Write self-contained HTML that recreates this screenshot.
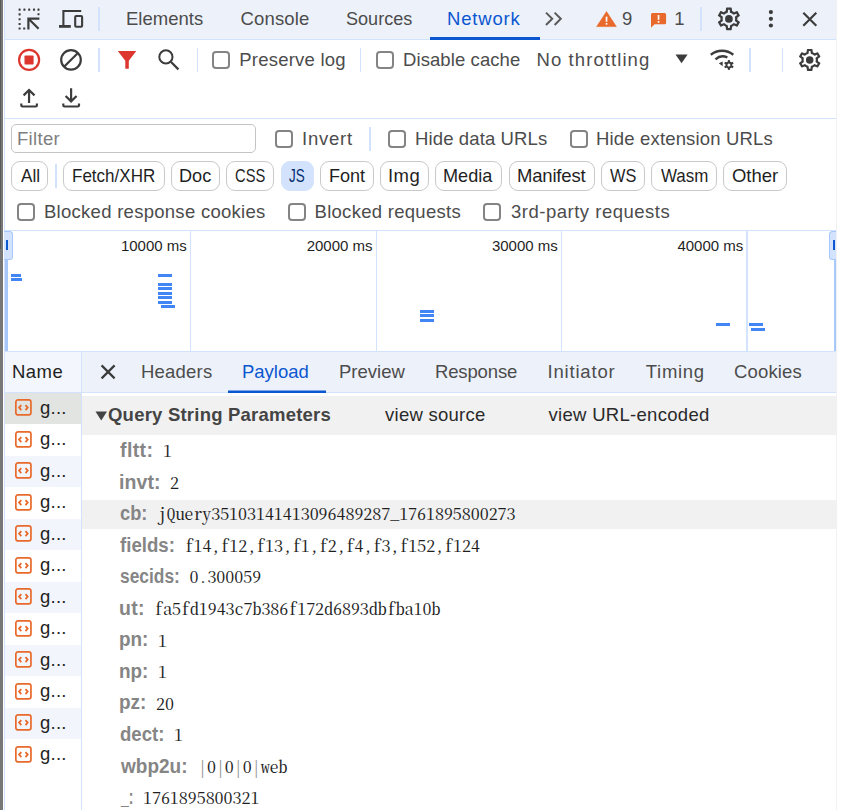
<!DOCTYPE html>
<html lang="en">
<head>
<meta charset="utf-8">
<title>DevTools - Network</title>
<style>
html,body{margin:0;padding:0;}
body{width:841px;height:810px;overflow:hidden;background:#fff;position:relative;
  font-family:"Liberation Sans",sans-serif;font-size:18.5px;color:#4c4c4c;}
.abs{position:absolute;}
.t{position:absolute;white-space:nowrap;line-height:24px;height:24px;}
.sep{position:absolute;width:1.9px;background:#d3e3fd;}
.hline{position:absolute;height:1px;background:#d3e3fd;left:5px;width:831px;}
.cb{position:absolute;box-sizing:border-box;width:18px;height:18px;border:2px solid #848484;border-radius:4px;background:#fff;}
.pill{position:absolute;top:161px;height:27.6px;border:1px solid #c9c9c9;border-radius:9px;box-sizing:content-box;
  color:#1f1f1f;text-align:center;line-height:27px;white-space:nowrap;}
.pill.sel{background:#d3e3fd;border-color:#d3e3fd;color:#062e6f;}
.tick{position:absolute;top:236px;font-size:15px;line-height:20px;color:#1f1f1f;white-space:nowrap;text-align:right;}
.grid{position:absolute;top:231px;height:120px;width:1.5px;background:#d3e3fd;}
.bar{position:absolute;height:3px;background:#4285f4;}
.row{position:absolute;left:5px;width:76px;height:31.5px;}
.row.alt{background:#f2f6fc;}
.row.sel{background:#e2e4e2;}
.row svg{position:absolute;left:9.5px;top:6.9px;}
.row span{position:absolute;left:35px;top:3px;line-height:24px;color:#1f1f1f;letter-spacing:0.25px;}
.k{position:absolute;left:120px;font-weight:bold;color:#858585;white-space:nowrap;line-height:24px;}
.v{position:absolute;white-space:nowrap;line-height:24px;color:#1f1f1f;
  font-family:"Noto Serif CJK SC","Liberation Mono",monospace;font-feature-settings:"hwid";font-size:18px;letter-spacing:-0.05px;transform:scaleY(0.9);transform-origin:0 19.8px;}
</style>
</head>
<body>
<div class="abs" style="left:0;top:0;width:3px;height:810px;background:#777"></div>
<div class="abs" style="left:0;top:0;width:1.4px;height:249px;background:#5a5a5a"></div>
<div class="abs" style="left:4px;top:0;width:1px;height:810px;background:#d3e3fd"></div>
<div class="abs" style="left:836px;top:0;width:1px;height:810px;background:#f1f1f1"></div>
<div class="abs" style="left:5px;top:0;width:831px;height:39px;background:#edf2fa"></div>
<div class="hline" style="top:39px"></div>
<div class="sep" style="left:98.3px;top:7px;height:23.5px"></div>
<div class="sep" style="left:700.3px;top:7px;height:23.5px"></div>
<div class="t" style="left:126.00px;top:6.5px;letter-spacing:0.019px;">Elements</div>
<div class="t" style="left:240.50px;top:6.5px;letter-spacing:0.152px;">Console</div>
<div class="t" style="left:345.50px;top:6.5px;transform:scaleX(0.9761);transform-origin:0 0;">Sources</div>
<div class="t" style="left:447.00px;top:6.5px;letter-spacing:0.817px;color:#0b57d0;">Network</div>
<div class="abs" style="left:430px;top:37px;width:110px;height:2.5px;background:#0b57d0"></div>
<div class="t" style="left:622.00px;top:6.5px;">9</div>
<div class="t" style="left:674.30px;top:6.5px;">1</div>
<div class="sep" style="left:98.3px;top:48px;height:24px"></div>
<div class="sep" style="left:196.5px;top:48px;height:24px"></div>
<div class="sep" style="left:359.5px;top:48px;height:24px"></div>
<div class="sep" style="left:749.2px;top:48px;height:24px"></div>
<div class="sep" style="left:781.5px;top:48px;height:24px"></div>
<div class="cb" style="left:212px;top:51px"></div>
<div class="t" style="left:239.30px;top:47.5px;letter-spacing:0.221px;">Preserve log</div>
<div class="cb" style="left:376px;top:51px"></div>
<div class="t" style="left:403.00px;top:47.5px;letter-spacing:0.090px;">Disable cache</div>
<div class="t" style="left:536.50px;top:47.5px;letter-spacing:1.087px;">No throttling</div>
<div class="hline" style="top:118px"></div>
<div class="abs" style="left:11px;top:124px;width:243px;height:26.5px;border:1px solid #c4c4c4;border-radius:5px;background:#fff"></div>
<div class="t" style="left:17.00px;top:127.3px;letter-spacing:0.310px;color:#7e7e7e;">Filter</div>
<div class="cb" style="left:275px;top:130px"></div>
<div class="t" style="left:302.00px;top:126.5px;letter-spacing:0.774px;">Invert</div>
<div class="sep" style="left:369px;top:127px;height:23.5px"></div>
<div class="cb" style="left:388px;top:130px"></div>
<div class="t" style="left:415.00px;top:126.5px;letter-spacing:0.127px;">Hide data URLs</div>
<div class="cb" style="left:570px;top:130px"></div>
<div class="t" style="left:596.00px;top:126.5px;letter-spacing:0.165px;">Hide extension URLs</div>
<div class="pill" style="left:11px;width:35px"></div>
<div class="t" style="left:21.00px;top:163.5px;transform:scaleX(0.9255);transform-origin:0 0;color:#1f1f1f;">All</div>
<div class="sep" style="left:55px;top:164px;height:24px"></div>
<div class="pill" style="left:63px;width:99.5px"></div>
<div class="t" style="left:72.00px;top:163.5px;transform:scaleX(0.9202);transform-origin:0 0;color:#1f1f1f;">Fetch/XHR</div>
<div class="pill" style="left:171px;width:46.5px"></div>
<div class="t" style="left:179.00px;top:163.5px;transform:scaleX(0.9795);transform-origin:0 0;color:#1f1f1f;">Doc</div>
<div class="pill" style="left:226px;width:45.5px"></div>
<div class="t" style="left:235.00px;top:163.5px;transform:scaleX(0.7958);transform-origin:0 0;color:#1f1f1f;">CSS</div>
<div class="pill sel" style="left:280.5px;width:31.0px"></div>
<div class="t" style="left:289.00px;top:163.5px;transform:scaleX(0.7294);transform-origin:0 0;color:#062e6f;">JS</div>
<div class="pill" style="left:320px;width:51.5px"></div>
<div class="t" style="left:328.50px;top:163.5px;transform:scaleX(0.9755);transform-origin:0 0;color:#1f1f1f;">Font</div>
<div class="pill" style="left:380px;width:46.5px"></div>
<div class="t" style="left:388.00px;top:163.5px;letter-spacing:0.475px;color:#1f1f1f;">Img</div>
<div class="pill" style="left:435px;width:65px"></div>
<div class="t" style="left:443.00px;top:163.5px;transform:scaleX(0.9781);transform-origin:0 0;color:#1f1f1f;">Media</div>
<div class="pill" style="left:508.5px;width:84.0px"></div>
<div class="t" style="left:517.00px;top:163.5px;letter-spacing:-0.182px;color:#1f1f1f;">Manifest</div>
<div class="pill" style="left:601px;width:41.5px"></div>
<div class="t" style="left:610.00px;top:163.5px;transform:scaleX(0.8825);transform-origin:0 0;color:#1f1f1f;">WS</div>
<div class="pill" style="left:651px;width:63.5px"></div>
<div class="t" style="left:661.00px;top:163.5px;transform:scaleX(0.9159);transform-origin:0 0;color:#1f1f1f;">Wasm</div>
<div class="pill" style="left:723px;width:61.5px"></div>
<div class="t" style="left:732.00px;top:163.5px;letter-spacing:-0.027px;color:#1f1f1f;">Other</div>
<div class="cb" style="left:17px;top:203px"></div>
<div class="t" style="left:44.00px;top:199.5px;letter-spacing:0.275px;">Blocked response cookies</div>
<div class="cb" style="left:288px;top:203px"></div>
<div class="t" style="left:314.50px;top:199.5px;letter-spacing:0.289px;">Blocked requests</div>
<div class="cb" style="left:483px;top:203px"></div>
<div class="t" style="left:511.00px;top:199.5px;letter-spacing:0.507px;">3rd-party requests</div>
<div class="hline" style="top:230px"></div>
<div class="grid" style="left:189.8px"></div>
<div class="grid" style="left:375.8px"></div>
<div class="grid" style="left:560.6px"></div>
<div class="grid" style="left:746.3px"></div>
<div class="tick" style="left:106.80000000000001px;width:80px">10000 ms</div>
<div class="tick" style="left:292.5px;width:80px">20000 ms</div>
<div class="tick" style="left:477.79999999999995px;width:80px">30000 ms</div>
<div class="tick" style="left:663.3px;width:80px">40000 ms</div>
<div class="abs" style="left:4.6px;top:231px;width:3.3px;height:120px;background:#a8c7fa"></div>
<div class="abs" style="left:4.4px;top:230.8px;width:8.6px;height:29px;box-sizing:border-box;background:#d3e3fd;border:1px solid #a8c7fa;border-left:0;border-radius:0 3.5px 3.5px 0"></div>
<div class="abs" style="left:5.9px;top:240px;width:2.3px;height:10px;background:#0b57d0"></div>
<div class="abs" style="left:834px;top:231px;width:2.2px;height:120px;background:#a8c7fa"></div>
<div class="abs" style="left:828.9px;top:230.8px;width:7.3px;height:29px;box-sizing:border-box;background:#d3e3fd;border:1px solid #a8c7fa;border-right:0;border-radius:3.5px 0 0 3.5px"></div>
<div class="abs" style="left:832.9px;top:240px;width:2.2px;height:10px;background:#0b57d0"></div>
<div class="bar" style="left:11px;top:273.70px;width:10.0px"></div>
<div class="bar" style="left:11px;top:278.20px;width:11.0px"></div>
<div class="bar" style="left:158px;top:273.70px;width:14.0px"></div>
<div class="bar" style="left:158.2px;top:282.70px;width:14.0px"></div>
<div class="bar" style="left:158.2px;top:287.20px;width:14.0px"></div>
<div class="bar" style="left:158.2px;top:291.70px;width:14.0px"></div>
<div class="bar" style="left:158.2px;top:296.20px;width:14.0px"></div>
<div class="bar" style="left:158.2px;top:300.70px;width:14.0px"></div>
<div class="bar" style="left:161px;top:305.20px;width:13.8px"></div>
<div class="bar" style="left:419.5px;top:309.70px;width:14.5px"></div>
<div class="bar" style="left:419.5px;top:314.20px;width:14.5px"></div>
<div class="bar" style="left:419.5px;top:318.70px;width:14.5px"></div>
<div class="bar" style="left:715.6px;top:323.20px;width:14.6px"></div>
<div class="bar" style="left:749px;top:323.20px;width:14.0px"></div>
<div class="bar" style="left:751px;top:327.70px;width:14.0px"></div>
<div class="hline" style="top:351px"></div>
<div class="abs" style="left:5px;top:352px;width:76.5px;height:40px;background:#f3f6fc"></div>
<div class="abs" style="left:82px;top:352px;width:754px;height:39.5px;background:#edf2fa"></div>
<div class="abs" style="left:5px;top:392px;width:77px;height:1px;background:#d3e3fd"></div>
<div class="abs" style="left:82px;top:391.5px;width:754px;height:1px;background:#d3e3fd"></div>
<div class="abs" style="left:81.2px;top:352px;width:1.3px;height:458px;background:#d3e3fd"></div>
<div class="t" style="left:12.00px;top:359.9px;letter-spacing:0.480px;color:#1f1f1f;">Name</div>
<div class="t" style="left:141.00px;top:359.9px;letter-spacing:0.221px;">Headers</div>
<div class="t" style="left:242.00px;top:359.9px;letter-spacing:-0.011px;color:#0b57d0;">Payload</div>
<div class="abs" style="left:227.5px;top:390px;width:98px;height:1px;background:#7ca3e6"></div>
<div class="abs" style="left:227.5px;top:391px;width:98px;height:2px;background:#0b57d0"></div>
<div class="t" style="left:339.00px;top:359.9px;letter-spacing:0.010px;">Preview</div>
<div class="t" style="left:435.00px;top:359.9px;letter-spacing:-0.145px;">Response</div>
<div class="t" style="left:547.50px;top:359.9px;letter-spacing:0.812px;">Initiator</div>
<div class="t" style="left:645.80px;top:359.9px;letter-spacing:0.693px;">Timing</div>
<div class="t" style="left:734.00px;top:359.9px;letter-spacing:0.152px;">Cookies</div>
<div class="row sel" style="top:392.5px"><svg width="17" height="17" viewBox="0 0 17 17"><rect x="0.85" y="0.85" width="15.1" height="15.1" rx="2.2" fill="none" stroke="#e8692b" stroke-width="1.7"/><path d="M6.3 6.1 4.1 8.6 6.3 11.1M10.5 6.1 12.7 8.6 10.5 11.1" fill="none" stroke="#e8692b" stroke-width="1.8"/></svg><span>g...</span></div>
<div class="row" style="top:424.0px"><svg width="17" height="17" viewBox="0 0 17 17"><rect x="0.85" y="0.85" width="15.1" height="15.1" rx="2.2" fill="none" stroke="#e8692b" stroke-width="1.7"/><path d="M6.3 6.1 4.1 8.6 6.3 11.1M10.5 6.1 12.7 8.6 10.5 11.1" fill="none" stroke="#e8692b" stroke-width="1.8"/></svg><span>g...</span></div>
<div class="row alt" style="top:455.5px"><svg width="17" height="17" viewBox="0 0 17 17"><rect x="0.85" y="0.85" width="15.1" height="15.1" rx="2.2" fill="none" stroke="#e8692b" stroke-width="1.7"/><path d="M6.3 6.1 4.1 8.6 6.3 11.1M10.5 6.1 12.7 8.6 10.5 11.1" fill="none" stroke="#e8692b" stroke-width="1.8"/></svg><span>g...</span></div>
<div class="row" style="top:487.0px"><svg width="17" height="17" viewBox="0 0 17 17"><rect x="0.85" y="0.85" width="15.1" height="15.1" rx="2.2" fill="none" stroke="#e8692b" stroke-width="1.7"/><path d="M6.3 6.1 4.1 8.6 6.3 11.1M10.5 6.1 12.7 8.6 10.5 11.1" fill="none" stroke="#e8692b" stroke-width="1.8"/></svg><span>g...</span></div>
<div class="row alt" style="top:518.5px"><svg width="17" height="17" viewBox="0 0 17 17"><rect x="0.85" y="0.85" width="15.1" height="15.1" rx="2.2" fill="none" stroke="#e8692b" stroke-width="1.7"/><path d="M6.3 6.1 4.1 8.6 6.3 11.1M10.5 6.1 12.7 8.6 10.5 11.1" fill="none" stroke="#e8692b" stroke-width="1.8"/></svg><span>g...</span></div>
<div class="row" style="top:550.0px"><svg width="17" height="17" viewBox="0 0 17 17"><rect x="0.85" y="0.85" width="15.1" height="15.1" rx="2.2" fill="none" stroke="#e8692b" stroke-width="1.7"/><path d="M6.3 6.1 4.1 8.6 6.3 11.1M10.5 6.1 12.7 8.6 10.5 11.1" fill="none" stroke="#e8692b" stroke-width="1.8"/></svg><span>g...</span></div>
<div class="row alt" style="top:581.5px"><svg width="17" height="17" viewBox="0 0 17 17"><rect x="0.85" y="0.85" width="15.1" height="15.1" rx="2.2" fill="none" stroke="#e8692b" stroke-width="1.7"/><path d="M6.3 6.1 4.1 8.6 6.3 11.1M10.5 6.1 12.7 8.6 10.5 11.1" fill="none" stroke="#e8692b" stroke-width="1.8"/></svg><span>g...</span></div>
<div class="row" style="top:613.0px"><svg width="17" height="17" viewBox="0 0 17 17"><rect x="0.85" y="0.85" width="15.1" height="15.1" rx="2.2" fill="none" stroke="#e8692b" stroke-width="1.7"/><path d="M6.3 6.1 4.1 8.6 6.3 11.1M10.5 6.1 12.7 8.6 10.5 11.1" fill="none" stroke="#e8692b" stroke-width="1.8"/></svg><span>g...</span></div>
<div class="row alt" style="top:644.5px"><svg width="17" height="17" viewBox="0 0 17 17"><rect x="0.85" y="0.85" width="15.1" height="15.1" rx="2.2" fill="none" stroke="#e8692b" stroke-width="1.7"/><path d="M6.3 6.1 4.1 8.6 6.3 11.1M10.5 6.1 12.7 8.6 10.5 11.1" fill="none" stroke="#e8692b" stroke-width="1.8"/></svg><span>g...</span></div>
<div class="row" style="top:676.0px"><svg width="17" height="17" viewBox="0 0 17 17"><rect x="0.85" y="0.85" width="15.1" height="15.1" rx="2.2" fill="none" stroke="#e8692b" stroke-width="1.7"/><path d="M6.3 6.1 4.1 8.6 6.3 11.1M10.5 6.1 12.7 8.6 10.5 11.1" fill="none" stroke="#e8692b" stroke-width="1.8"/></svg><span>g...</span></div>
<div class="row alt" style="top:707.5px"><svg width="17" height="17" viewBox="0 0 17 17"><rect x="0.85" y="0.85" width="15.1" height="15.1" rx="2.2" fill="none" stroke="#e8692b" stroke-width="1.7"/><path d="M6.3 6.1 4.1 8.6 6.3 11.1M10.5 6.1 12.7 8.6 10.5 11.1" fill="none" stroke="#e8692b" stroke-width="1.8"/></svg><span>g...</span></div>
<div class="row" style="top:739.0px"><svg width="17" height="17" viewBox="0 0 17 17"><rect x="0.85" y="0.85" width="15.1" height="15.1" rx="2.2" fill="none" stroke="#e8692b" stroke-width="1.7"/><path d="M6.3 6.1 4.1 8.6 6.3 11.1M10.5 6.1 12.7 8.6 10.5 11.1" fill="none" stroke="#e8692b" stroke-width="1.8"/></svg><span>g...</span></div>
<div class="abs" style="left:82px;top:396.2px;width:754px;height:38.4px;background:#f1f1f1"></div>
<div class="t" style="left:108.00px;top:403.0px;letter-spacing:0.219px;font-weight:bold;color:#444;">Query String Parameters</div>
<div class="t" style="left:385.00px;top:403.0px;letter-spacing:0.261px;color:#2a2a2a;">view source</div>
<div class="t" style="left:548.50px;top:403.0px;letter-spacing:0.299px;color:#2a2a2a;">view URL-encoded</div>
<div class="abs" style="left:82px;top:499.5px;width:754px;height:29.3px;background:#f1f1f1"></div>
<div class="k" style="left:120.00px;top:438.00px;font-size:19.5px;letter-spacing:0.400px;">fltt:</div>
<div class="v" style="left:163px;top:437.20px">1</div>
<div class="k" style="left:119.00px;top:469.55px;font-size:19.5px;letter-spacing:0.083px;">invt:</div>
<div class="v" style="left:170px;top:468.75px">2</div>
<div class="k" style="left:120.00px;top:501.10px;font-size:19.5px;transform:scaleX(0.9367);transform-origin:0 0;">cb:</div>
<div class="v" style="left:157.5px;top:500.30px">jQuery35103141413096489287_1761895800273</div>
<div class="k" style="left:120.00px;top:532.65px;font-size:19.5px;transform:scaleX(0.9565);transform-origin:0 0;">fields:</div>
<div class="v" style="left:184.5px;top:531.85px">f14,f12,f13,f1,f2,f4,f3,f152,f124</div>
<div class="k" style="left:120.00px;top:564.20px;font-size:19.5px;transform:scaleX(0.8903);transform-origin:0 0;">secids:</div>
<div class="v" style="left:189.5px;top:563.40px">0.300059</div>
<div class="k" style="left:119.00px;top:595.75px;font-size:19.5px;letter-spacing:0.297px;">ut:</div>
<div class="v" style="left:154px;top:594.95px">fa5fd1943c7b386f172d6893dbfba10b</div>
<div class="k" style="left:119.00px;top:627.30px;font-size:19.5px;transform:scaleX(0.9704);transform-origin:0 0;">pn:</div>
<div class="v" style="left:158px;top:626.50px">1</div>
<div class="k" style="left:119.00px;top:658.85px;font-size:19.5px;transform:scaleX(0.9704);transform-origin:0 0;">np:</div>
<div class="v" style="left:158px;top:658.05px">1</div>
<div class="k" style="left:119.00px;top:690.40px;font-size:19.5px;transform:scaleX(0.9742);transform-origin:0 0;">pz:</div>
<div class="v" style="left:156px;top:689.60px">20</div>
<div class="k" style="left:120.00px;top:721.95px;font-size:19.5px;transform:scaleX(0.9535);transform-origin:0 0;">dect:</div>
<div class="v" style="left:174px;top:721.15px">1</div>
<div class="k" style="left:121.00px;top:753.50px;font-size:19.5px;transform:scaleX(0.9742);transform-origin:0 0;">wbp2u:</div>
<div class="v" style="left:198px;top:752.70px"><span style="color:#9a9a9a">|</span>0<span style="color:#9a9a9a">|</span>0<span style="color:#9a9a9a">|</span>0<span style="color:#9a9a9a">|</span>web</div>
<div class="k" style="left:121.00px;top:785.05px;font-size:19.5px;transform:scaleX(0.7124);transform-origin:0 0;">_:</div>
<div class="v" style="left:143px;top:784.25px">1761895800321</div>
<svg class="abs" style="left:0;top:0" width="841" height="810" viewBox="0 0 841 810">
<g fill="#3c3c3c"><rect x="18.55" y="8.55" width="2.1" height="2.1" rx="0.4"/><rect x="23.35" y="8.55" width="2.1" height="2.1" rx="0.4"/><rect x="28.15" y="8.55" width="2.1" height="2.1" rx="0.4"/><rect x="32.95" y="8.55" width="2.1" height="2.1" rx="0.4"/><rect x="37.45" y="8.55" width="2.1" height="2.1" rx="0.4"/><rect x="18.55" y="13.35" width="2.1" height="2.1" rx="0.4"/><rect x="18.55" y="18.15" width="2.1" height="2.1" rx="0.4"/><rect x="18.55" y="22.95" width="2.1" height="2.1" rx="0.4"/><rect x="18.55" y="27.45" width="2.1" height="2.1" rx="0.4"/><rect x="37.45" y="13.15" width="2.1" height="2.1" rx="0.4"/><rect x="23.15" y="27.45" width="2.1" height="2.1" rx="0.4"/></g>
<path d="M39.4 18.6H28.4V29.4M28.8 19 38.6 28.8" fill="none" stroke="#3c3c3c" stroke-width="2.2"/>
<path d="M81.2 11H63.4V25.2" fill="none" stroke="#3c3c3c" stroke-width="2.1"/>
<rect x="59" y="25" width="11.8" height="2.8" fill="#3c3c3c"/>
<rect x="75.2" y="16" width="6.9" height="10.8" rx="1" fill="none" stroke="#3c3c3c" stroke-width="2.1"/>
<path d="M546 12.6 552.2 18.8 546 25M554.6 12.6 560.8 18.8 554.6 25" fill="none" stroke="#5a5a5a" stroke-width="2"/>
<path d="M606.5 11.6 616.3 26.6H596.7Z" fill="#e8692b" stroke="#e8692b" stroke-width="0.6" stroke-linejoin="round"/><rect x="605.7" y="16.6" width="1.7" height="5.2" fill="#fff"/><rect x="605.7" y="23" width="1.7" height="1.7" fill="#fff"/>
<path d="M652.4 12.9H664.6Q666.1 12.9 666.1 14.4V22.7Q666.1 24.2 664.6 24.2H654.6L651 27.7V14.4Q651 12.9 652.4 12.9Z" fill="#e8692b"/><rect x="657.7" y="15" width="1.7" height="4.8" fill="#fff"/><rect x="657.7" y="21" width="1.7" height="1.7" fill="#fff"/>
<g transform="translate(715.34,5.34) scale(1.1300)" fill="#3c3c3c"><path d="M19.43 12.98c.04-.32.07-.64.07-.98 0-.34-.03-.66-.07-.98l2.11-1.65c.19-.15.24-.42.12-.64l-2-3.46c-.09-.16-.26-.25-.44-.25-.06 0-.12.01-.17.03l-2.49 1c-.52-.4-1.08-.73-1.69-.98l-.38-2.65C14.46 2.18 14.25 2 14 2h-4c-.25 0-.46.18-.49.42l-.38 2.65c-.61.25-1.17.59-1.69.98l-2.49-1c-.06-.02-.12-.03-.18-.03-.17 0-.34.09-.43.25l-2 3.46c-.13.22-.07.49.12.64l2.11 1.65c-.04.32-.07.65-.07.98 0 .33.03.66.07.98l-2.11 1.65c-.19.15-.24.42-.12.64l2 3.46c.09.16.26.25.44.25.06 0 .12-.01.17-.03l2.49-1c.52.4 1.08.73 1.69.98l.38 2.65c.03.24.24.42.49.42h4c.25 0 .46-.18.49-.42l.38-2.65c.61-.25 1.17-.59 1.69-.98l2.49 1c.06.02.12.03.18.03.17 0 .34-.09.43-.25l2-3.46c.12-.22.07-.49-.12-.64l-2.11-1.65zm-1.98-1.71c.04.31.05.52.05.73 0 .21-.02.43-.05.73l-.14 1.13.89.7 1.08.84-.7 1.21-1.27-.51-1.04-.42-.9.68c-.43.32-.84.56-1.25.73l-1.06.43-.16 1.13-.2 1.35h-1.4l-.19-1.35-.16-1.13-1.06-.43c-.43-.18-.83-.41-1.23-.71l-.91-.7-1.06.43-1.27.51-.7-1.21 1.08-.84.89-.7-.14-1.13c-.03-.31-.05-.54-.05-.74s.02-.43.05-.73l.14-1.13-.89-.7-1.08-.84.7-1.21 1.27.51 1.04.42.9-.68c.43-.32.84-.56 1.25-.73l1.06-.43.16-1.13.2-1.35h1.39l.19 1.35.16 1.13 1.06.43c.43.18.83.41 1.23.71l.91.7 1.06-.43 1.27-.51.7 1.21-1.07.85-.89.7.14 1.13z"/><circle cx="12" cy="12" r="3.4"/></g>
<circle cx="770.9" cy="12.1" r="2.1" fill="#3c3c3c"/><circle cx="770.9" cy="18.8" r="2.1" fill="#3c3c3c"/><circle cx="770.9" cy="25.5" r="2.1" fill="#3c3c3c"/>
<path d="M803.3 12.7 816.3 25.7M816.3 12.7 803.3 25.7" fill="none" stroke="#3c3c3c" stroke-width="2.2"/>
<circle cx="29.1" cy="59.9" r="10" fill="none" stroke="#dc362e" stroke-width="2.2"/><rect x="24.5" y="55.4" width="9.1" height="9.1" rx="0.8" fill="#dc362e"/>
<circle cx="71" cy="59.9" r="9.8" fill="none" stroke="#3c3c3c" stroke-width="2.2"/><path d="M64.1 66.8 77.9 53" stroke="#3c3c3c" stroke-width="2.2"/>
<path d="M117.8 51.1H136.3L128.8 60.8V68.8H125.3V60.8Z" fill="#dc362e"/>
<circle cx="165.9" cy="56.9" r="6.6" fill="none" stroke="#3c3c3c" stroke-width="2"/><path d="M170.8 61.8 178.4 69.4" stroke="#3c3c3c" stroke-width="2.2"/>
<path d="M675.5 54.6H687.6L681.55 63.2Z" fill="#3c3c3c"/>
<path d="M710.8 54.8A17.8 17.8 0 0 1 733.3 54.8M715.5 59.3A10.7 10.7 0 0 1 727.4 57.5" fill="none" stroke="#3c3c3c" stroke-width="2.4"/><path d="M718.8 63.2 722.7 61.6V66.3Z" fill="#3c3c3c"/><g transform="translate(728.9,65)" fill="#3c3c3c"><circle r="2.45" fill="none" stroke="#3c3c3c" stroke-width="1.9"/><rect x="-1.05" y="-4.9" width="2.1" height="2" transform="rotate(0)"/><rect x="-1.05" y="-4.9" width="2.1" height="2" transform="rotate(60)"/><rect x="-1.05" y="-4.9" width="2.1" height="2" transform="rotate(120)"/><rect x="-1.05" y="-4.9" width="2.1" height="2" transform="rotate(180)"/><rect x="-1.05" y="-4.9" width="2.1" height="2" transform="rotate(240)"/><rect x="-1.05" y="-4.9" width="2.1" height="2" transform="rotate(300)"/></g>
<g transform="translate(796.50,46.70) scale(1.1000)" fill="#3c3c3c"><path d="M19.43 12.98c.04-.32.07-.64.07-.98 0-.34-.03-.66-.07-.98l2.11-1.65c.19-.15.24-.42.12-.64l-2-3.46c-.09-.16-.26-.25-.44-.25-.06 0-.12.01-.17.03l-2.49 1c-.52-.4-1.08-.73-1.69-.98l-.38-2.65C14.46 2.18 14.25 2 14 2h-4c-.25 0-.46.18-.49.42l-.38 2.65c-.61.25-1.17.59-1.69.98l-2.49-1c-.06-.02-.12-.03-.18-.03-.17 0-.34.09-.43.25l-2 3.46c-.13.22-.07.49.12.64l2.11 1.65c-.04.32-.07.65-.07.98 0 .33.03.66.07.98l-2.11 1.65c-.19.15-.24.42-.12.64l2 3.46c.09.16.26.25.44.25.06 0 .12-.01.17-.03l2.49-1c.52.4 1.08.73 1.69.98l.38 2.65c.03.24.24.42.49.42h4c.25 0 .46-.18.49-.42l.38-2.65c.61-.25 1.17-.59 1.69-.98l2.49 1c.06.02.12.03.18.03.17 0 .34-.09.43-.25l2-3.46c.12-.22.07-.49-.12-.64l-2.11-1.65zm-1.98-1.71c.04.31.05.52.05.73 0 .21-.02.43-.05.73l-.14 1.13.89.7 1.08.84-.7 1.21-1.27-.51-1.04-.42-.9.68c-.43.32-.84.56-1.25.73l-1.06.43-.16 1.13-.2 1.35h-1.4l-.19-1.35-.16-1.13-1.06-.43c-.43-.18-.83-.41-1.23-.71l-.91-.7-1.06.43-1.27.51-.7-1.21 1.08-.84.89-.7-.14-1.13c-.03-.31-.05-.54-.05-.74s.02-.43.05-.73l.14-1.13-.89-.7-1.08-.84.7-1.21 1.27.51 1.04.42.9-.68c.43-.32.84-.56 1.25-.73l1.06-.43.16-1.13.2-1.35h1.39l.19 1.35.16 1.13 1.06.43c.43.18.83.41 1.23.71l.91.7 1.06-.43 1.27-.51.7 1.21-1.07.85-.89.7.14 1.13z"/><circle cx="12" cy="12" r="3.4"/></g>
<path d="M21.3 103.6V105.3Q21.3 106.5 22.5 106.5H35.7Q36.9 106.5 36.9 105.3V103.6M29.05 103V90.4M23.6 95.4 29.05 90 34.5 95.4" fill="none" stroke="#3c3c3c" stroke-width="2.2"/>
<path d="M63.3 103.6V105.3Q63.3 106.5 64.5 106.5H77.8Q79 106.5 79 105.3V103.6M71.1 88.3V100.8M65.6 96 71.1 101.4 76.6 96" fill="none" stroke="#3c3c3c" stroke-width="2.2"/>
<path d="M101.6 365.4 114.6 378.4M114.6 365.4 101.6 378.4" fill="none" stroke="#3c3c3c" stroke-width="2.2"/>
<path d="M95.5 411.5H107L101.25 420.5Z" fill="#444"/>
</svg>
</body>
</html>
